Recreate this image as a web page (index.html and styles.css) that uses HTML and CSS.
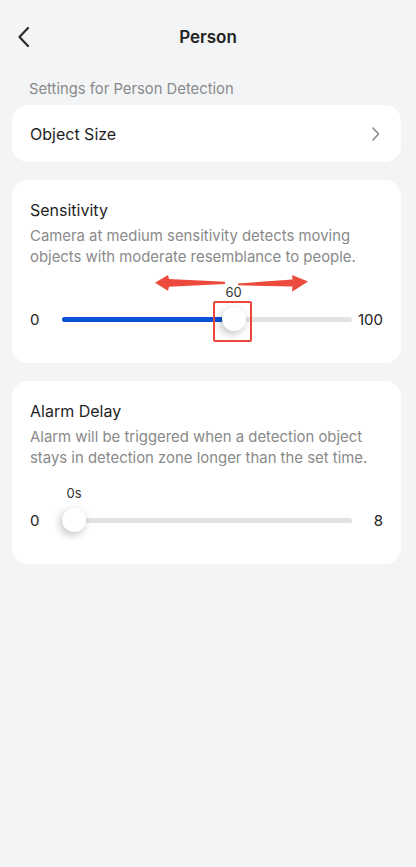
FILE: index.html
```html
<!DOCTYPE html>
<html lang="en">
<head>
  <meta charset="UTF-8">
  <meta name="viewport" content="width=device-width, initial-scale=1.0">
  <title>Person</title>
  <link rel="stylesheet" href="styles.css">
</head>
<body>
  <div class="page">
    <div class="topbar">
      <div class="back">
        <svg width="14" height="22" viewBox="0 0 14 22">
          <polyline points="11,2 2.5,11 11,20" fill="none" stroke="#2b2b2b" stroke-width="2.2" stroke-linecap="round" stroke-linejoin="round"/>
        </svg>
      </div>
      <div class="title">Person</div>
      <div></div>
    </div>

    <div class="section-label">Settings for Person Detection</div>

    <div class="card row-card">
      <span class="card-title">Object Size</span>
      <svg class="chevron" width="10" height="16" viewBox="0 0 10 16">
        <polyline points="2,2 7.5,8 2,14" fill="none" stroke="#8a8a8a" stroke-width="1.6" stroke-linecap="round" stroke-linejoin="round"/>
      </svg>
    </div>

    <div class="card setting-card">
      <div class="card-title">Sensitivity</div>
      <div class="card-desc">Camera at medium sensitivity detects moving objects with moderate resemblance to people.</div>
      <div class="slider">
        <span class="slider-min">0</span>
        <div class="track" style="--p: 0.6">
          <div class="fill"></div>
          <div class="thumb">
            <span class="value">60</span>
            <div class="mark"></div>
          </div>
        </div>
        <span class="slider-max">100</span>
      </div>
      <svg class="arrows" width="162" height="25" viewBox="150 270 162 25">
        <polygon points="155,282.7 168,275 169,279 225,281.8 225,284 169,286.8 168,290.8" fill="#ec4a3c"/>
        <polygon points="308,281.5 292,275 292.5,279.6 238,283.4 238,285.3 292.5,286.6 292,291.7" fill="#ec4a3c"/>
      </svg>
    </div>

    <div class="card setting-card">
      <div class="card-title">Alarm Delay</div>
      <div class="card-desc">Alarm will be triggered when a detection object stays in detection zone longer than the set time.</div>
      <div class="slider">
        <span class="slider-min">0</span>
        <div class="track" style="--p: 0">
          <div class="fill"></div>
          <div class="thumb">
            <span class="value">0s</span>
          </div>
        </div>
        <span class="slider-max">8</span>
      </div>
    </div>
  </div>
</body>
</html>
```

FILE: styles.css
```css
body {
  margin: 0;
  padding: 0;
  background: #f3f4f6;
  font-family: 'Inter', 'Roboto', sans-serif;
  color: #1f1f1f;
}
.page {
  min-height: 100vh;
  padding-bottom: 20px;
}
.topbar {
  height: 74px;
  display: grid;
  grid-template-columns: 1fr auto 1fr;
  align-items: center;
}
.back {
  padding-left: 17px;
  display: flex;
  align-items: center;
}
.title {
  font-size: 17px;
  font-weight: 600;
  color: #222;
}
.section-label {
  padding: 5px 29px 6px;
  font-size: 14.8px;
  line-height: 20px;
  color: #8a8a8a;
}
.card {
  background: #fff;
  margin: 0 15px 18px 12px;
  border-radius: 16px;
}
.row-card {
  height: 57px;
  padding: 0 20px 0 18px;
  display: flex;
  align-items: center;
  justify-content: space-between;
}
.card-title {
  font-size: 16px;
  line-height: 22px;
  color: #1f1f1f;
}
.setting-card {
  position: relative;
  padding: 19px 18px 32px;
}
.card-desc {
  margin-top: 5px;
  font-size: 14.9px;
  line-height: 21px;
  color: #8a8a8a;
}
.slider {
  margin-top: 39px;
  height: 24px;
  display: grid;
  grid-template-columns: 32px 1fr 31px;
  align-items: center;
  font-size: 15px;
  color: #222;
}
.slider-max {
  text-align: right;
}
.track {
  position: relative;
  height: 5px;
  border-radius: 3px;
  background: #e3e3e5;
}
.fill {
  height: 100%;
  width: calc(12px + var(--p) * (100% - 24px));
  border-radius: 3px;
  background: #0a4fd8;
}
.thumb {
  position: absolute;
  top: -9.5px;
  left: calc(var(--p) * (100% - 24px));
  width: 24px;
  height: 24px;
  border-radius: 50%;
  background: #fff;
  box-shadow: -2px 3px 8px rgba(0, 0, 0, 0.24);
}
.value {
  position: absolute;
  left: 50%;
  bottom: calc(100% + 7px);
  transform: translateX(-50%);
  font-size: 13px;
  line-height: 16px;
  color: #333;
  white-space: nowrap;
}
.mark {
  position: absolute;
  left: -9px;
  top: -6px;
  width: 39px;
  height: 41px;
  box-sizing: border-box;
  border: 2px solid #e8473c;
  border-radius: 2px;
}
.arrows {
  position: absolute;
  left: 138px;
  top: 90px;
}
```
